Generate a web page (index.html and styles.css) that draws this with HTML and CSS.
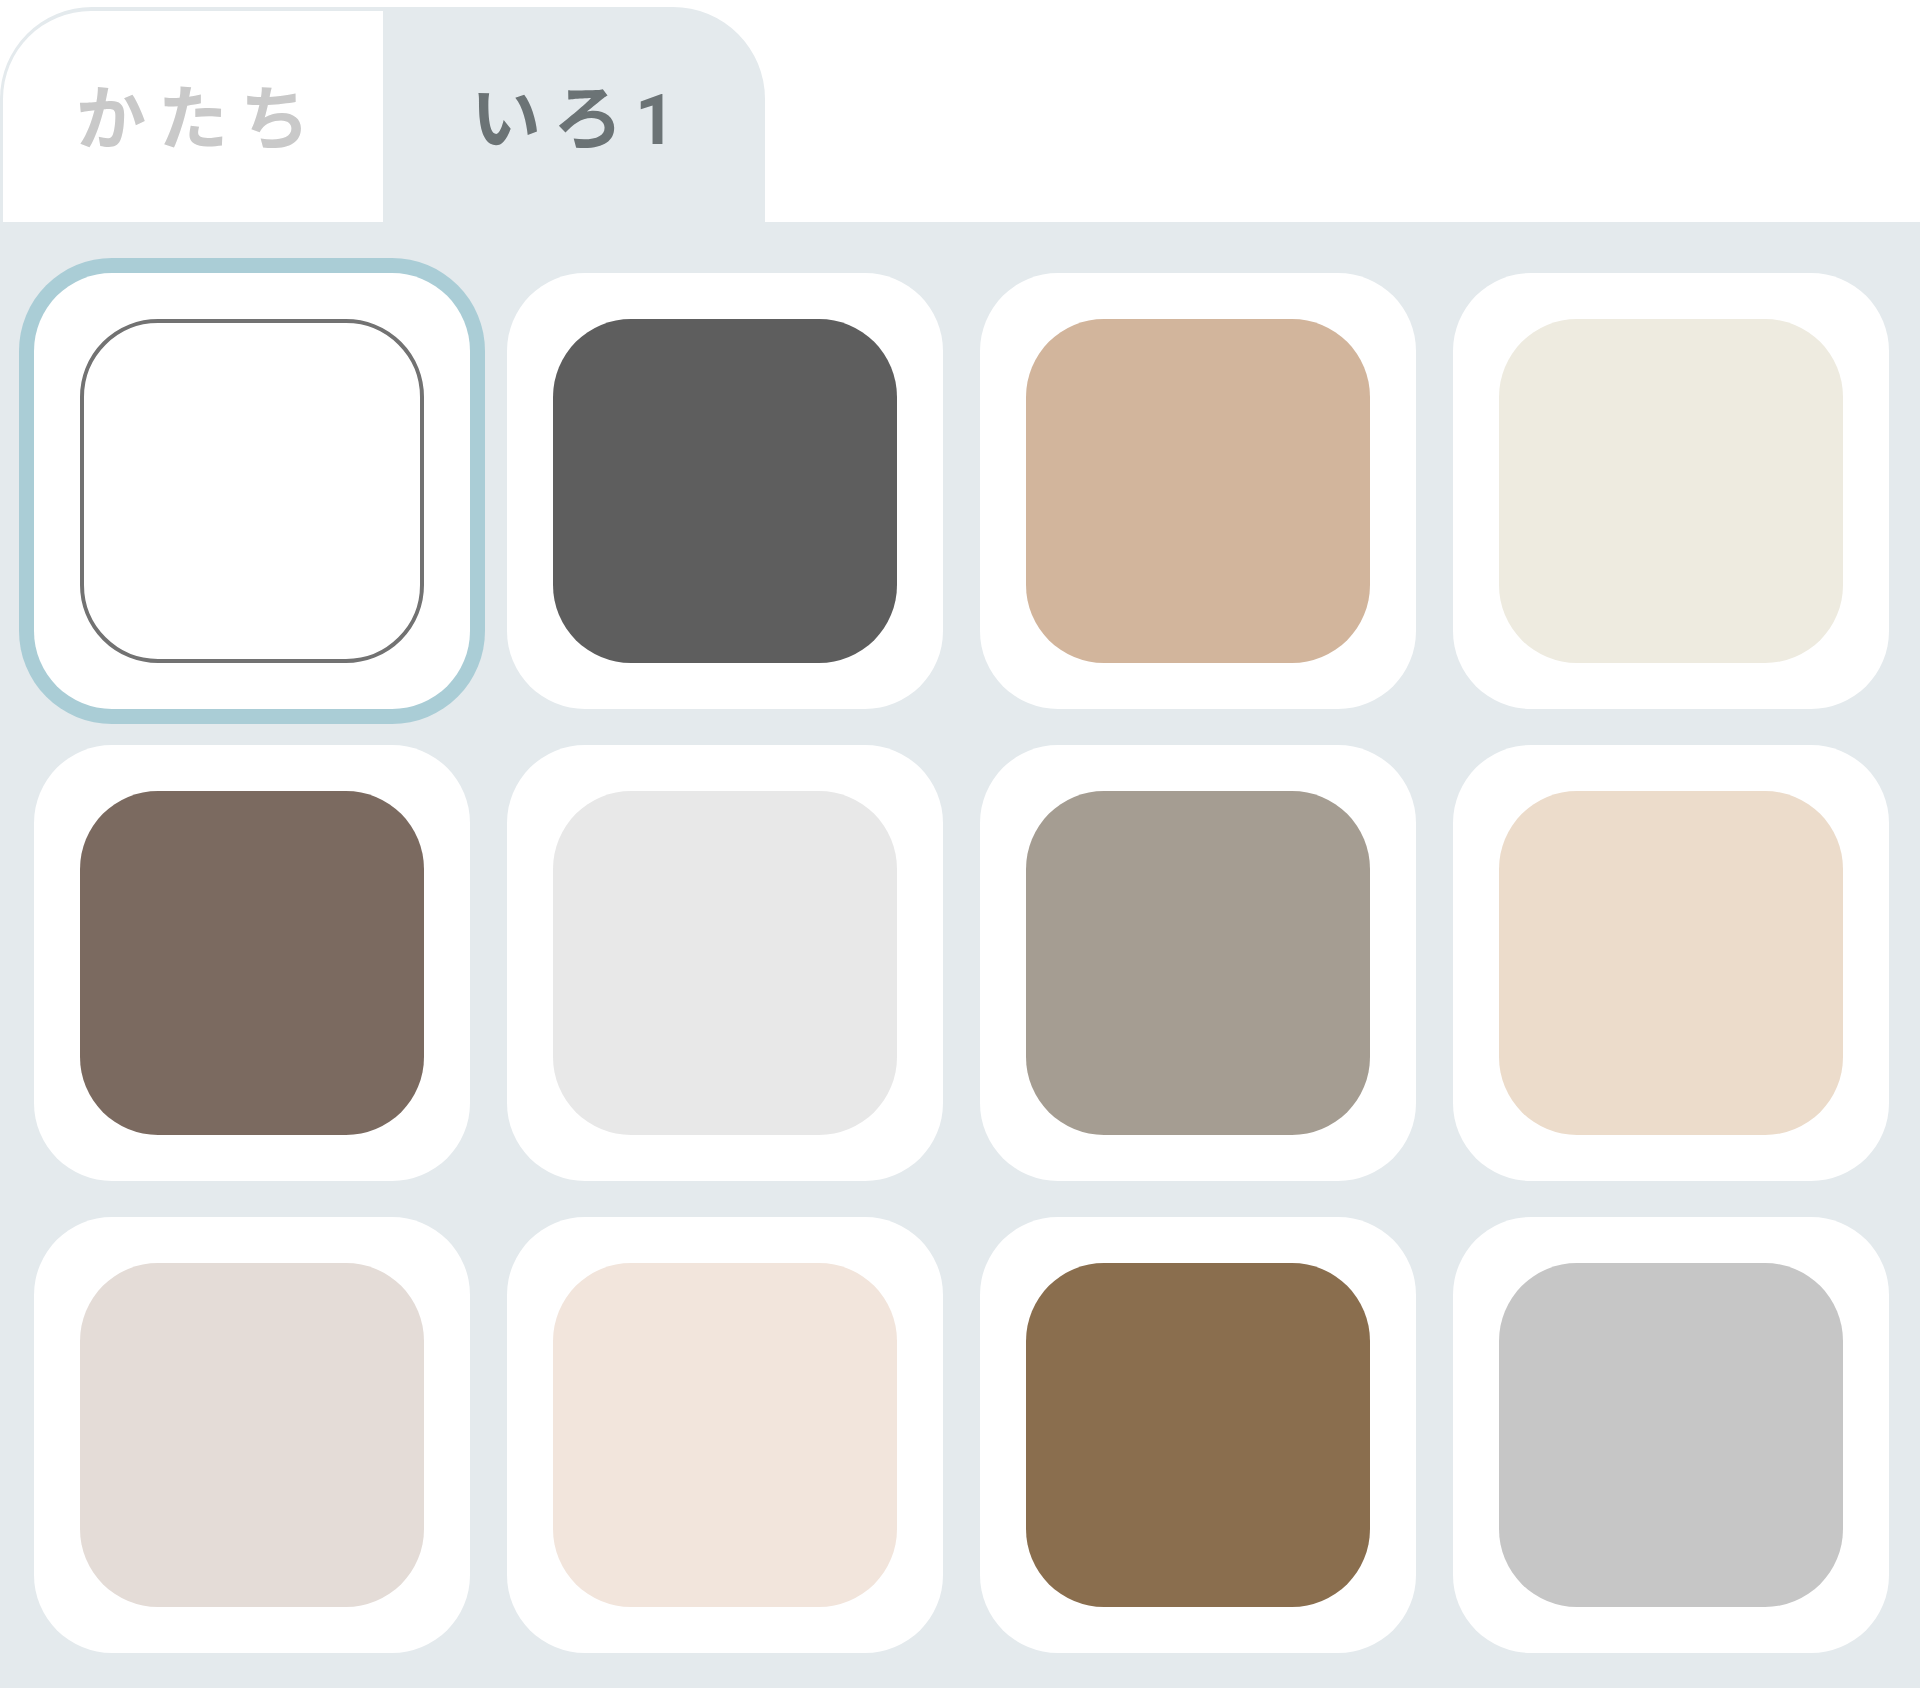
FILE: index.html
```html
<!DOCTYPE html>
<html lang="ja">
<head>
<meta charset="utf-8">
<title>いろ</title>
<link rel="stylesheet" href="styles.css">
</head>
<body>
<div class="picker">
  <div class="tabs">
    <div class="tab tab-shape">かたち</div>
    <div class="tab tab-color">いろ1</div>
  </div>
  <div class="panel">
    <div class="grid">
      <div class="card selected"><div class="swatch swatch-white"></div></div>
      <div class="card"><div class="swatch c2"></div></div>
      <div class="card"><div class="swatch c3"></div></div>
      <div class="card"><div class="swatch c4"></div></div>
      <div class="card"><div class="swatch c5"></div></div>
      <div class="card"><div class="swatch c6"></div></div>
      <div class="card"><div class="swatch c7"></div></div>
      <div class="card"><div class="swatch c8"></div></div>
      <div class="card"><div class="swatch c9"></div></div>
      <div class="card"><div class="swatch c10"></div></div>
      <div class="card"><div class="swatch c11"></div></div>
      <div class="card"><div class="swatch c12"></div></div>
    </div>
  </div>
</div>
</body>
</html>
```

FILE: styles.css
```css
html, body {
  margin: 0;
  padding: 0;
  background: #ffffff;
}

body {
  font-family: Roboto, "Noto Sans CJK JP", "Noto Sans", sans-serif;
}

.picker {
  width: 1920px;
  padding-top: 7px;
}

.tabs {
  display: flex;
  width: 765px;
  height: 215px;
  box-sizing: border-box;
  background: #e4eaed;
  border-radius: 92px 92px 0 0;
  padding: 4px 0 0 3px;
}

.tab {
  display: flex;
  align-items: center;
  justify-content: center;
  font-size: 70px;
  font-weight: 700;
  letter-spacing: 12px;
  line-height: 1;
  padding-top: 6px;
  padding-left: 12px;
  box-sizing: border-box;
}

.tab-shape {
  width: 380px;
  background: #ffffff;
  color: #c9c9c9;
  border-top-left-radius: 88px;
}

.tab-color {
  flex: 1;
  color: #6b7375;
  padding-left: 10px;
}

.panel {
  background: #e4eaed;
  height: 1466px;
  box-sizing: border-box;
  padding: 51px 0 0 34px;
}

.grid {
  display: grid;
  grid-template-columns: repeat(4, 436px);
  grid-auto-rows: 436px;
  column-gap: 37px;
  row-gap: 36px;
}

.card {
  background: #ffffff;
  border-radius: 78px;
  display: flex;
  align-items: center;
  justify-content: center;
}

.card.selected {
  box-shadow: 0 0 0 15px #aacdd6;
}

.swatch {
  width: 344px;
  height: 344px;
  border-radius: 78px;
  box-sizing: border-box;
}

.swatch-white {
  background: #ffffff;
  border: 4px solid #727272;
}

.c2 { background: #5e5e5e; }
.c3 { background: #d2b59c; }
.c4 { background: #eeebe0; }
.c5 { background: #7b6a60; }
.c6 { background: #e8e8e8; }
.c7 { background: #a59d92; }
.c8 { background: #ecdccb; }
.c9 { background: #e4dcd7; }
.c10 { background: #f2e5dc; }
.c11 { background: #8a6e4e; }
.c12 { background: #c6c6c6; }
```
